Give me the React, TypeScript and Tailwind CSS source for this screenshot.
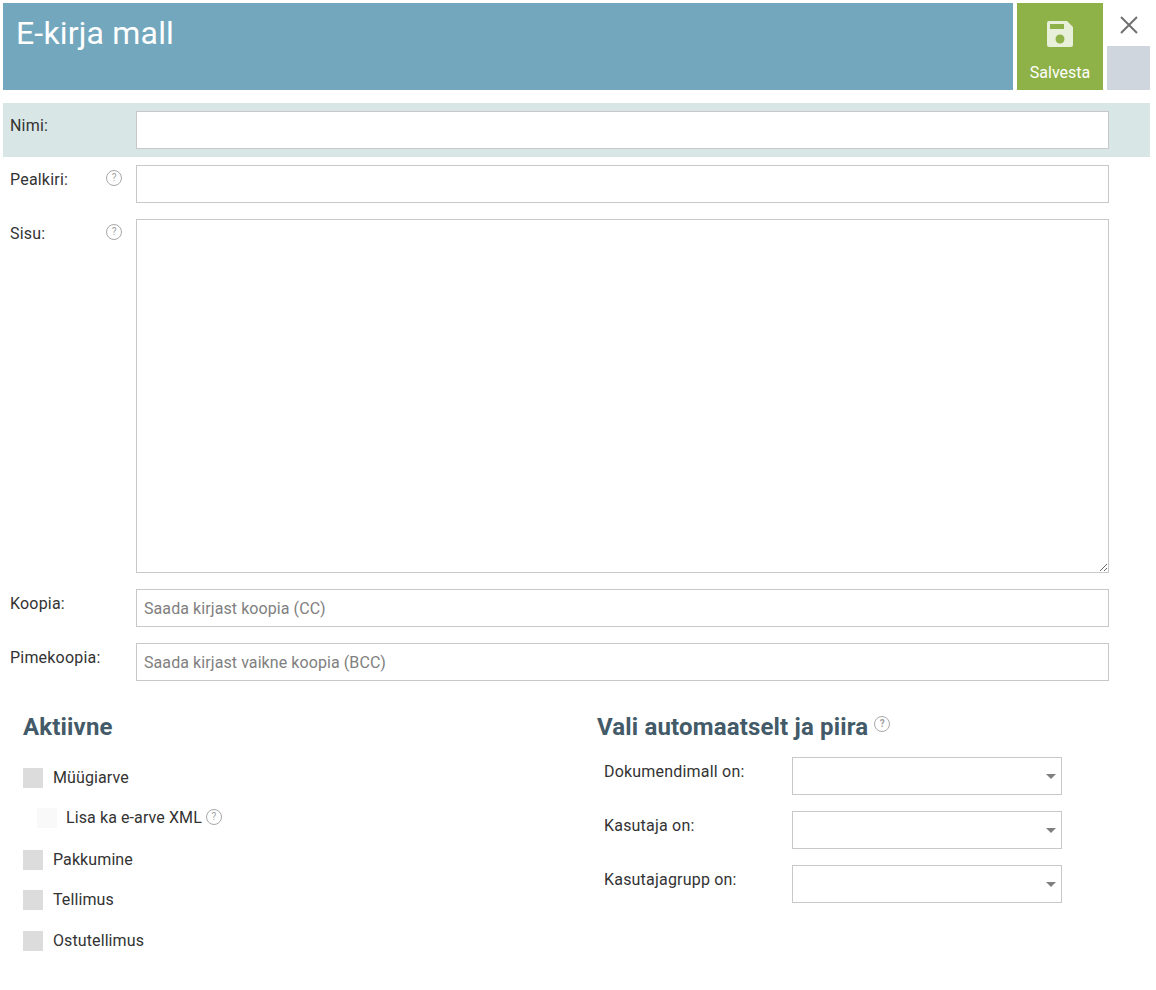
import React from 'react';

const HelpIcon: React.FC = () => (
  <span className="inline-flex items-center justify-center w-4 h-4 rounded-full border border-[#a8a8a8] text-[10px] leading-none text-[#a0a0a0] bg-white">
    ?
  </span>
);

interface RowProps {
  label: string;
  help?: boolean;
  highlight?: boolean;
  children: React.ReactNode;
}

const Row: React.FC<RowProps> = ({ label, help, highlight, children }) => (
  <div className={`flex py-2 pl-[7px] pr-[41px] ${highlight ? 'bg-[#d8e6e5]' : ''}`}>
    <div className="w-[126px] shrink-0 flex items-start justify-between pr-[14px] pt-[5px]">
      <span className="-mt-px text-[16px] leading-[22px] tracking-[0.2px] text-[#333333]">{label}</span>
      {help && <HelpIcon />}
    </div>
    <div className="flex-1">{children}</div>
  </div>
);

const inputClass =
  'block w-full h-[38px] px-[7px] bg-white border border-[#c8c8c8] text-[16px] tracking-[0.08px] text-[#333333] placeholder:text-[#808080] outline-none';

const CheckRow: React.FC<{ label: string; sub?: boolean; help?: boolean; className: string }> = ({ label, sub, help, className }) => (
  <label className={`flex items-center ${className}`}>
    <span className={`w-5 h-5 shrink-0 ${sub ? 'bg-[#f9f9f9] ml-[14px] mr-[9px]' : 'bg-[#dcdcdc] mr-[10px]'}`} />
    <span className="text-[16px] leading-[20px] tracking-[0.1px] text-[#333333] -mt-px">{label}</span>
    {help && (
      <span className="ml-[4px] -mt-[3px] flex">
        <HelpIcon />
      </span>
    )}
  </label>
);

const SelectRow: React.FC<{ label: string }> = ({ label }) => (
  <div className="flex">
    <div className="w-[195px] pl-[7px] pt-[4px] text-[16px] leading-[22px] tracking-[0.2px] text-[#333333]">{label}</div>
    <div className="relative w-[270px] h-[38px] border border-[#c8c8c8] bg-white">
      <span className="absolute right-[5px] top-[16px] w-0 h-0 border-x-[5px] border-x-transparent border-t-[5px] border-t-[#808080]" />
    </div>
  </div>
);

export default function App() {
  return (
    <div className="w-[1156px] h-[990px] bg-white pt-[3px] px-[3px] font-['Roboto',sans-serif] overflow-hidden">
      {/* Header */}
      <div className="flex h-[87px] w-[1147px]">
        <div className="w-[1010px] bg-[#73a7bd] px-[14px] pt-[12px]">
          <h1 className="text-[32px] leading-[36px] tracking-[0.18px] text-white font-normal -ml-px">E-kirja mall</h1>
        </div>
        <button className="ml-1 w-[86px] bg-[#8eb247] flex flex-col items-center pt-[18px]">
          <svg width="26" height="26" viewBox="0 0 26 26">
            <path
              fill="#e9f0da"
              d="M2 0h18l6 6v18a2 2 0 0 1-2 2H2a2 2 0 0 1-2-2V2a2 2 0 0 1 2-2z"
            />
            <rect x="3" y="3" width="14" height="5" fill="#8eb247" />
            <circle cx="13" cy="18" r="4.5" fill="#8eb247" />
          </svg>
          <span className="mt-[17px] text-[16px] leading-[18px] text-white">Salvesta</span>
        </button>
        <div className="ml-1 w-[43px] flex flex-col">
          <div className="h-[43px] flex items-center justify-center">
            <svg width="20" height="20" viewBox="0 0 20 20">
              <path d="M2 2l16 16M18 2L2 18" stroke="#707070" strokeWidth="2" fill="none" />
            </svg>
          </div>
          <div className="h-[44px] bg-[#cfd6de]" />
        </div>
      </div>

      {/* Form */}
      <div className="mt-[13px] w-[1147px]">
        <Row label="Nimi:" highlight>
          <input className={inputClass} />
        </Row>
        <Row label="Pealkiri:" help>
          <input className={inputClass} />
        </Row>
        <Row label="Sisu:" help>
          <textarea className="block w-full h-[354px] px-[7px] py-1 bg-white border border-[#c8c8c8] text-[16px] outline-none" />
        </Row>
        <Row label="Koopia:">
          <input className={inputClass} placeholder="Saada kirjast koopia (CC)" />
        </Row>
        <Row label="Pimekoopia:">
          <input className={inputClass} placeholder="Saada kirjast vaikne koopia (BCC)" />
        </Row>
      </div>

      {/* Bottom columns */}
      <div className="flex mt-[25px] pl-[20px]">
        <div className="w-[574px]">
          <h2 className="text-[24px] leading-[27px] tracking-[0.16px] font-bold text-[#435a68]">Aktiivne</h2>
          <CheckRow label="Müügiarve" className="mt-[27px]" />
          <CheckRow label="Lisa ka e-arve XML" sub help className="mt-5" />
          <CheckRow label="Pakkumine" className="mt-[22px]" />
          <CheckRow label="Tellimus" className="mt-5" />
          <CheckRow label="Ostutellimus" className="mt-[21px]" />
        </div>
        <div>
          <h2 className="flex text-[24px] leading-[27px] tracking-[0.16px] font-bold text-[#435a68]">
            Vali automaatselt ja piira
            <span className="ml-[6px] mt-[2px] flex">
              <HelpIcon />
            </span>
          </h2>
          <div className="mt-[16px] flex flex-col gap-4">
            <SelectRow label="Dokumendimall on:" />
            <SelectRow label="Kasutaja on:" />
            <SelectRow label="Kasutajagrupp on:" />
          </div>
        </div>
      </div>
    </div>
  );
}
